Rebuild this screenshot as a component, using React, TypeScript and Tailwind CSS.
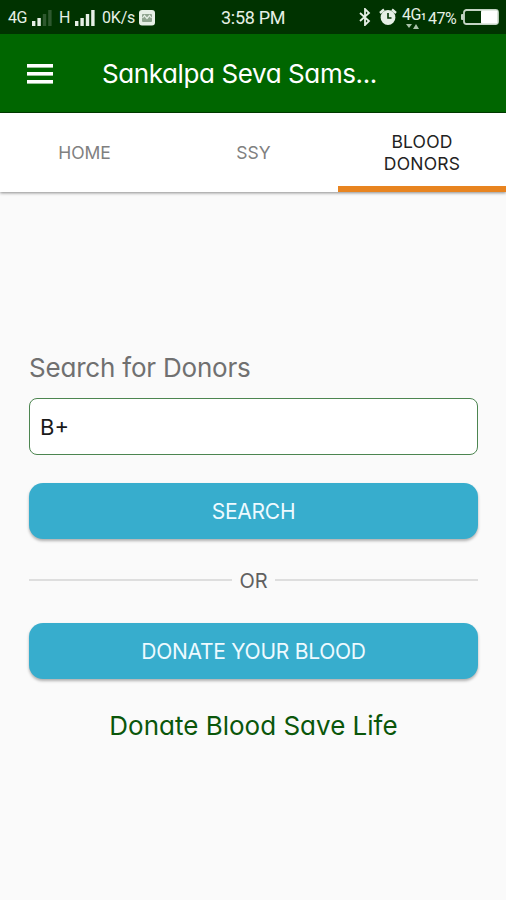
import clsx from 'clsx'

function SignalBars({ active }: { active: number }) {
  return (
    <svg width="20" height="16" viewBox="0 0 20 16" fill="#e6f0e6">
      {[5, 8, 12, 16].map((h, i) => (
        <rect
          key={h}
          x={i * 5.4}
          y={16 - h}
          width="3.4"
          height={h}
          opacity={i < active ? 1 : 0.2}
        />
      ))}
    </svg>
  )
}

function StatusBar() {
  return (
    <div className="grid h-[34px] shrink-0 grid-cols-[221px_64px_1fr] items-center bg-[#003300] font-['Roboto',sans-serif] text-[#e6f0e6]">
      <div className="flex items-center pt-0.5 pl-2 text-[16px] leading-none">
        <span className="w-[24px] tracking-[-0.4px]">4G</span>
        <SignalBars active={2} />
        <span className="ml-[7px] w-[16px]">H</span>
        <SignalBars active={4} />
        <span className="ml-[7px] w-[37px] tracking-[-0.2px] whitespace-nowrap">0K/s</span>
        <svg width="16" height="16" viewBox="0 0 16 16">
          <rect width="16" height="15.5" rx="3" fill="#e6f0e6" />
          <rect x="3" y="4" width="10" height="8" rx="1" fill="#8fa58f" />
          <path d="M3.5 8l2-2.5 2.5 3 2.5-3 2 2.5" fill="none" stroke="#e6f0e6" strokeWidth="1.2" />
        </svg>
      </div>
      <div className="pt-[2px] text-center text-[18px] leading-none tracking-[-0.3px] whitespace-nowrap">
        3:58 PM
      </div>
      <div className="flex items-center justify-end pr-[7px]">
        <svg width="12" height="18" viewBox="0 0 12 18" fill="none" stroke="#e6f0e6" strokeWidth="1.8">
          <path d="M1 5l9 8-4 4V1l4 4-9 8" />
        </svg>
        <svg className="ml-[8px]" width="18" height="18" viewBox="0 0 18 18">
          <circle cx="9" cy="9.5" r="7.4" fill="#e6f0e6" />
          <path d="M1 5l4-3.5M17 5l-4-3.5" stroke="#e6f0e6" strokeWidth="2.4" />
          <path d="M9 5v5h3.5" fill="none" stroke="#003300" strokeWidth="1.6" />
        </svg>
        <div className="ml-[5px] flex w-[25px] flex-col pt-[2px]">
          <span className="flex items-baseline text-[16px] leading-[15px] tracking-[-0.5px]">
            4G<span className="text-[9px] font-bold">1</span>
          </span>
          <svg className="-mt-px ml-1" width="14" height="5" viewBox="0 0 14 5" fill="#a9c2a9">
            <path d="M0 0h6L3 4zM10 0l3 5H7z" />
          </svg>
        </div>
        <span className="ml-[1px] w-[31px] pt-[3px] text-[16px] leading-none tracking-[-0.5px]">47%</span>
        <svg className="ml-[2px]" width="38" height="16" viewBox="0 0 38 16">
          <rect x="3" y="1" width="34" height="14" rx="2.5" fill="none" stroke="#c4d4c4" strokeWidth="1.8" />
          <rect x="0" y="5" width="2.6" height="6" rx="1" fill="#c4d4c4" />
          <rect x="20" y="1.5" width="16.5" height="13" rx="1" fill="#fff" />
        </svg>
      </div>
    </div>
  )
}

function AppBar() {
  return (
    <header className="flex h-[79px] shrink-0 items-center border-b border-[#003d00] bg-[#006600] pl-[27px] text-white">
      <svg className="mt-px" width="26" height="20" viewBox="0 0 26 20" fill="currentColor">
        <rect y="0" width="26" height="3.6" />
        <rect y="8" width="26" height="3.6" />
        <rect y="16" width="26" height="3.6" />
      </svg>
      <h1 className="ml-[49px] pt-[2px] text-[26px] leading-8 tracking-[-0.4px]">Sankalpa Seva Sams...</h1>
    </header>
  )
}

const tabs = [
  { label: 'HOME', active: false },
  { label: 'SSY', active: false },
  { label: 'BLOOD DONORS', active: true },
]

function Tabs() {
  return (
    <nav className="grid h-[79px] shrink-0 grid-cols-[169px_169px_168px] bg-white shadow-[0_1px_3px_rgba(0,0,0,0.45)]">
      {tabs.map((tab) => (
        <a
          key={tab.label}
          className={clsx(
            'flex items-center justify-center border-b-[6px] px-10 pt-[6px] text-center text-[17.5px] leading-[22px]',
            tab.active
              ? 'border-[#e88420] tracking-[0.2px] text-[#222222]'
              : 'border-transparent text-[#808080]',
          )}
        >
          {tab.label}
        </a>
      ))}
    </nav>
  )
}

function Button({ children }: { children: React.ReactNode }) {
  return (
    <button className="h-14 w-full rounded-[14px] bg-[#37adcd] text-[21px] leading-none tracking-[-0.25px] text-[#eefaff] shadow-[0_2px_3px_rgba(0,0,0,0.3)]">
      {children}
    </button>
  )
}

export default function App() {
  return (
    <div className="flex h-[900px] w-[506px] flex-col overflow-hidden bg-[#fafafa] font-['Inter',sans-serif] [font-feature-settings:'cv11']">
      <StatusBar />
      <AppBar />
      <Tabs />
      <main className="flex flex-col pt-[160px] pr-[28px] pl-[29px]">
        <label className="text-[26px] leading-8 tracking-[-0.2px] text-[#707070]">Search for Donors</label>
        <div className="mt-[14px] flex h-[57px] items-center rounded-[8px] border-[1.5px] border-[#4c8550] bg-white pt-px pl-[10px] text-[22px] text-[#1a1a1a]">
          B+
        </div>
        <div className="mt-[28px]">
          <Button>SEARCH</Button>
        </div>
        <div className="flex h-[84px] items-center gap-[7px] text-[20px] text-[#606060]">
          <span className="mb-[3px] h-[2px] flex-1 bg-[#dedede]" />
          OR
          <span className="mb-[3px] h-[2px] flex-1 bg-[#dedede]" />
        </div>
        <Button>DONATE YOUR BLOOD</Button>
        <p className="mt-[31px] text-center text-[26px] leading-8 text-[#0a560a]">Donate Blood Save Life</p>
      </main>
    </div>
  )
}
